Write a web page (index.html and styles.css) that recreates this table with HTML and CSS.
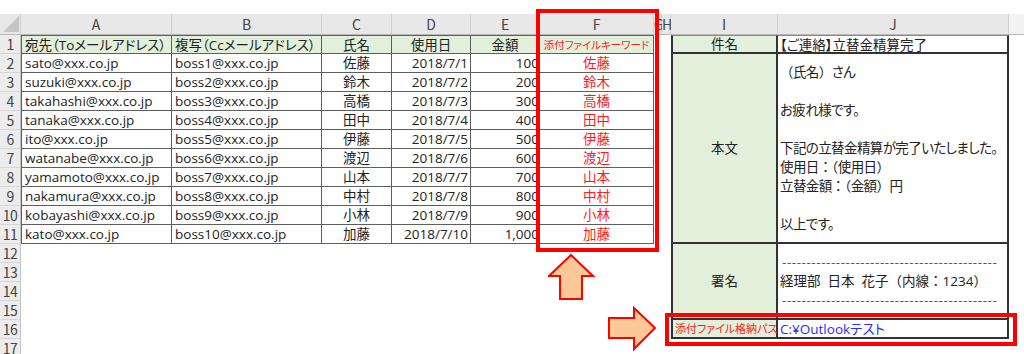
FILE: index.html
```html
<!DOCTYPE html>
<html lang="ja">
<head>
<meta charset="utf-8">
<title>Sheet</title>
<link rel="stylesheet" href="styles.css">
</head>
<body>
<div class="page">
  <div class="sheet">
    <!-- column header row -->
    <div class="hd corner"><svg class="tri" width="18" height="18" viewBox="0 0 18 18"><polygon points="17,1 17,17 1,17" fill="#c4c4c4"/></svg></div>
    <div class="hd">A</div>
    <div class="hd">B</div>
    <div class="hd">C</div>
    <div class="hd">D</div>
    <div class="hd">E</div>
    <div class="hd">F</div>
    <div class="hd">G</div>
    <div class="hd">H</div>
    <div class="hd">I</div>
    <div class="hd">J</div>
    <div class="hd hd-last"></div>

    <!-- row 1 -->
    <div class="rh">1</div>
    <div class="c g first l">宛先（Toメールアドレス）</div>
    <div class="c g l">複写（Ccメールアドレス）</div>
    <div class="c g m">氏名</div>
    <div class="c g m">使用日</div>
    <div class="c g m">金額</div>
    <div class="c g m red key">添付ファイルキーワード</div>
    <div class="gap11"></div>
    <div class="lab top">件名</div>
    <div class="val top">【ご連絡】立替金精算完了</div>
    <div class="k"></div>

    <!-- row 2 -->
    <div class="rh">2</div>
    <div class="c first l">sato@xxx.co.jp</div>
    <div class="c l">boss1@xxx.co.jp</div>
    <div class="c m">佐藤</div>
    <div class="c r">2018/7/1</div>
    <div class="c r num">100</div>
    <div class="c m red">佐藤</div>
    <div class="lab span10">本文</div>
    <div class="val span10 body-text">
      <div><span class="fw">（</span>氏名<span class="fw">）</span>さん</div>
      <div>&nbsp;</div>
      <div>お疲れ様です。</div>
      <div>&nbsp;</div>
      <div>下記の立替金精算が完了いたしました。</div>
      <div>使用日<span class="fw">：（</span>使用日<span class="fw">）</span></div>
      <div>立替金額<span class="fw">：（</span>金額<span class="fw">）</span>円</div>
      <div>&nbsp;</div>
      <div>以上です。</div>
    </div>
    <div class="k"></div>

    <div class="rh">3</div>
    <div class="c first l">suzuki@xxx.co.jp</div>
    <div class="c l">boss2@xxx.co.jp</div>
    <div class="c m">鈴木</div>
    <div class="c r">2018/7/2</div>
    <div class="c r num">200</div>
    <div class="c m red">鈴木</div>
    <div class="k"></div>

    <div class="rh">4</div>
    <div class="c first l">takahashi@xxx.co.jp</div>
    <div class="c l">boss3@xxx.co.jp</div>
    <div class="c m">高橋</div>
    <div class="c r">2018/7/3</div>
    <div class="c r num">300</div>
    <div class="c m red">高橋</div>
    <div class="k"></div>

    <div class="rh">5</div>
    <div class="c first l">tanaka@xxx.co.jp</div>
    <div class="c l">boss4@xxx.co.jp</div>
    <div class="c m">田中</div>
    <div class="c r">2018/7/4</div>
    <div class="c r num">400</div>
    <div class="c m red">田中</div>
    <div class="k"></div>

    <div class="rh">6</div>
    <div class="c first l">ito@xxx.co.jp</div>
    <div class="c l">boss5@xxx.co.jp</div>
    <div class="c m">伊藤</div>
    <div class="c r">2018/7/5</div>
    <div class="c r num">500</div>
    <div class="c m red">伊藤</div>
    <div class="k"></div>

    <div class="rh">7</div>
    <div class="c first l">watanabe@xxx.co.jp</div>
    <div class="c l">boss6@xxx.co.jp</div>
    <div class="c m">渡辺</div>
    <div class="c r">2018/7/6</div>
    <div class="c r num">600</div>
    <div class="c m red">渡辺</div>
    <div class="k"></div>

    <div class="rh">8</div>
    <div class="c first l">yamamoto@xxx.co.jp</div>
    <div class="c l">boss7@xxx.co.jp</div>
    <div class="c m">山本</div>
    <div class="c r">2018/7/7</div>
    <div class="c r num">700</div>
    <div class="c m red">山本</div>
    <div class="k"></div>

    <div class="rh">9</div>
    <div class="c first l">nakamura@xxx.co.jp</div>
    <div class="c l">boss8@xxx.co.jp</div>
    <div class="c m">中村</div>
    <div class="c r">2018/7/8</div>
    <div class="c r num">800</div>
    <div class="c m red">中村</div>
    <div class="k"></div>

    <div class="rh">10</div>
    <div class="c first l">kobayashi@xxx.co.jp</div>
    <div class="c l">boss9@xxx.co.jp</div>
    <div class="c m">小林</div>
    <div class="c r">2018/7/9</div>
    <div class="c r num">900</div>
    <div class="c m red">小林</div>
    <div class="k"></div>

    <div class="rh">11</div>
    <div class="c first l">kato@xxx.co.jp</div>
    <div class="c l">boss10@xxx.co.jp</div>
    <div class="c m">加藤</div>
    <div class="c r">2018/7/10</div>
    <div class="c r num">1,000</div>
    <div class="c m red">加藤</div>
    <div class="k"></div>

    <!-- row 12 -->
    <div class="rh">12</div>
    <div class="blank"></div>
    <div class="lab span4">署名</div>
    <div class="val span4 sig">
      <div class="dash">--------------------------------------------</div>
      <div class="pre">経理部  日本  花子<span class="fw">（</span>内線<span class="fw">：</span>1234<span class="fw">）</span></div>
      <div class="dash">--------------------------------------------</div>
    </div>
    <div class="k"></div>

    <div class="rh">13</div>
    <div class="blank"></div>
    <div class="k"></div>

    <div class="rh">14</div>
    <div class="blank"></div>
    <div class="k"></div>

    <div class="rh">15</div>
    <div class="blank"></div>
    <div class="k"></div>

    <div class="rh">16</div>
    <div class="blank"></div>
    <div class="lab path-lab">添付ファイル格納パス</div>
    <div class="val path">C:¥Outlookテスト</div>
    <div class="k"></div>

    <div class="rh">17</div>
    <div class="blank"></div>
    <div class="blank2"></div>
    <div class="k"></div>
  </div>

  <div class="hl hl-col"></div>
  <div class="hl hl-row"></div>

  <svg class="arrow arrow-up" width="52" height="52" viewBox="0 0 52 52">
    <polygon points="23,2 45,23 34,23 34,46 12,46 12,23 1,23" fill="#fcc897" stroke="#ff0000" stroke-width="2" stroke-linejoin="miter"/>
  </svg>
  <svg class="arrow arrow-right" width="52" height="48" viewBox="0 0 52 48">
    <polygon points="2,12 27,12 27,2 48,22 27,43 27,32 2,32" fill="#fcc897" stroke="#ff0000" stroke-width="2" stroke-linejoin="miter"/>
  </svg>
</div>
</body>
</html>
```
FILE: styles.css
```css
html, body {
  margin: 0;
  padding: 0;
  background: #ffffff;
  overflow: hidden;
}

.page {
  position: relative;
  width: 1024px;
  height: 354px;
  padding-top: 14px;
  box-sizing: border-box;
  font-family: "Open Sans", "Noto Sans CJK JP", sans-serif;
  font-feature-settings: "palt";
  font-size: 13.5px;
  color: #222;
}

.fw { font-feature-settings: normal; }

.sheet {
  display: grid;
  grid-template-columns: 21px 151px 150px 70px 79px 69px 114px 8px 9px 107px 231px 15px;
  grid-template-rows: 21px repeat(17, 19px);
}

.sheet > div {
  box-sizing: border-box;
  line-height: 18px;
  white-space: nowrap;
  min-width: 0;
}

/* column headers */
.hd {
  background: #e8e8e8;
  border-right: 1px solid #cfcfcf;
  border-bottom: 1px solid #b9b9b9;
  color: #444;
  text-align: center;
  font-family: "Noto Sans CJK JP", sans-serif;
  font-size: 14px;
  line-height: 20px !important;
  overflow: visible;
}
.hd-last { background: #f2f2f2; border-right: none; }
.corner { position: relative; }
.tri { display: block; margin: 1px 0 0 2px; }

/* row headers */
.rh {
  background: #ececec;
  border-right: 1px solid #c3c3c3;
  border-bottom: 1px solid #d6d6d6;
  color: #444;
  text-align: center;
  font-family: "Noto Sans CJK JP", sans-serif;
  font-size: 14px;
  letter-spacing: -0.6px;
  font-feature-settings: normal;
}

/* data table A-F */
.c {
  border-right: 1px solid #5e5e5e;
  border-bottom: 1px solid #5e5e5e;
  overflow: hidden;
  color: #222;
}
.c.first { border-left: 1px solid #5e5e5e; }
.c.g { background: #e2efda; border-top: 1px solid #5e5e5e; }
.l { padding-left: 3px; }
.m { text-align: center; }
.r { text-align: right; padding-right: 2px; }
.num { padding-right: 0; }
.red { color: #ff1a1a; }
.key { font-size: 10.5px; }

.gap11 { grid-row: span 11; grid-column: span 2; }
.blank { grid-column: span 8; }
.blank2 { grid-column: span 2; }
.k { background: #fff; }

/* I/J block */
.lab {
  background: #e2efda;
  border-left: 2px solid #333;
  border-right: 2px solid #333;
  border-bottom: 2px solid #333;
  display: flex;
  align-items: center;
  justify-content: center;
  color: #222;
}
.val {
  border-right: 2px solid #333;
  border-bottom: 2px solid #333;
  padding-left: 2px;
  color: #222;
}
.top { border-top: 1px solid #888; }
.span10 { grid-row: span 10; }
.span4 { grid-row: span 4; }

.body-text,
.sig {
  display: flex;
  flex-direction: column;
  justify-content: center;
  line-height: 19px !important;
}
.body-text { letter-spacing: -0.6px; }
.body-text > div,
.sig > div { line-height: 19px; }

.dash { color: #555; letter-spacing: 0.55px; padding-left: 2px; }
.pre { white-space: pre; }

.path-lab {
  justify-content: flex-start;
  padding-left: 2px;
  font-size: 11px;
  color: #ff1a1a;
}
.path { color: #2b2bff; }

/* highlight overlays */
.hl {
  position: absolute;
  border: 4px solid #ff0000;
  box-sizing: border-box;
}
.hl-col { left: 536px; top: 9px; width: 123px; height: 243px; }
.hl-row { left: 665px; top: 313px; width: 352px; height: 33px; }

.arrow { position: absolute; }
.arrow-up { left: 548px; top: 253px; }
.arrow-right { left: 607px; top: 306px; }
```
